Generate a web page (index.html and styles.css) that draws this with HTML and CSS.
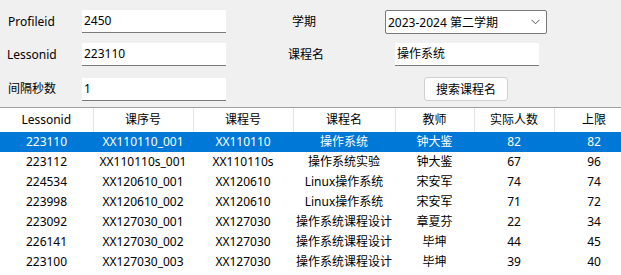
FILE: index.html
```html
<!DOCTYPE html>
<html lang="zh">
<head>
<meta charset="utf-8">
<link rel="stylesheet" href="styles.css">
</head>
<body>
<div class="form">
  <div class="row r1">
    <span class="lbl l1">Profileid</span>
    <div class="tb">2450</div>
    <span class="lbl rl1">学期</span>
    <div class="combo"><span>2023-2024 第二学期</span>
      <svg class="chev" width="9" height="6" viewBox="0 0 9 6"><polyline points="0.5,0.8 4.5,4.8 8.5,0.8" fill="none" stroke="#555" stroke-width="1"/></svg>
    </div>
  </div>
  <div class="row r2">
    <span class="lbl l2">Lessonid</span>
    <div class="tb">223110</div>
    <span class="lbl rl2">课程名</span>
    <div class="tb">操作系统</div>
  </div>
  <div class="row r3">
    <span class="lbl l1">间隔秒数</span>
    <div class="tb">1</div>
    <button class="btn">搜索课程名</button>
  </div>
</div>
<div class="grid-wrap">
  <table class="grid">
    <colgroup>
      <col class="c1"><col class="c2"><col class="c3"><col class="c4"><col class="c5"><col class="c6"><col class="c7">
    </colgroup>
    <thead>
      <tr><th>Lessonid</th><th>课序号</th><th>课程号</th><th>课程名</th><th>教师</th><th>实际人数</th><th>上限</th></tr>
    </thead>
    <tbody>
      <tr class="sel"><td>223110</td><td>XX110110_001</td><td>XX110110</td><td>操作系统</td><td>钟大鉴</td><td>82</td><td>82</td></tr>
      <tr><td>223112</td><td>XX110110s_001</td><td>XX110110s</td><td>操作系统实验</td><td>钟大鉴</td><td>67</td><td>96</td></tr>
      <tr><td>224534</td><td>XX120610_001</td><td>XX120610</td><td>Linux操作系统</td><td>宋安军</td><td>74</td><td>74</td></tr>
      <tr><td>223998</td><td>XX120610_002</td><td>XX120610</td><td>Linux操作系统</td><td>宋安军</td><td>71</td><td>72</td></tr>
      <tr><td>223092</td><td>XX127030_001</td><td>XX127030</td><td>操作系统课程设计</td><td>章夏芬</td><td>22</td><td>34</td></tr>
      <tr><td>226141</td><td>XX127030_002</td><td>XX127030</td><td>操作系统课程设计</td><td>毕坤</td><td>44</td><td>45</td></tr>
      <tr><td>223100</td><td>XX127030_003</td><td>XX127030</td><td>操作系统课程设计</td><td>毕坤</td><td>39</td><td>40</td></tr>
    </tbody>
  </table>
</div>
</body>
</html>
```

FILE: styles.css
```css
html, body {
  margin: 0;
  padding: 0;
  background: #f0f0f0;
  font-family: "Noto Sans", "Noto Sans CJK SC", sans-serif;
  font-size: 12px;
  color: #000;
  overflow: hidden;
}
.form {
  padding-top: 10px;
  height: 107px;
  box-sizing: border-box;
}
.row {
  display: flex;
  align-items: center;
  height: 23px;
}
.r2 { margin-top: 10px; }
.r3 { margin-top: 11px; height: 24px; }
.lbl {
  display: block;
  white-space: nowrap;
  line-height: 16px;
}
.l1 { margin-left: 8px; width: 74px; }
.l2 { margin-left: 7px; width: 75px; }
.rl1 { margin-left: 66px; width: 93px; }
.rl2 { margin-left: 62px; width: 107px; }
.tb {
  width: 144px;
  height: 23px;
  box-sizing: border-box;
  background: #fff;
  border-bottom: 1px solid #7a7a7a;
  padding-left: 2px;
  line-height: 22px;
  white-space: nowrap;
}
.combo {
  width: 162px;
  height: 24px;
  box-sizing: border-box;
  background: #fff;
  border: 1px solid #7a7a7a;
  border-radius: 2px;
  display: flex;
  align-items: center;
  justify-content: space-between;
  padding: 0 6px 0 2px;
  white-space: nowrap;
  margin-top: 1px;
}
.chev { display: block; }
.btn {
  margin-left: 198px;
  width: 84px;
  height: 24px;
  background: #fdfdfd;
  border: 1px solid #d0d0d0;
  border-radius: 3px;
  font: inherit;
  color: #000;
  padding: 0;
}
.grid-wrap {
  border-top: 1px solid #a0a0a0;
  background: #fff;
  height: 168px;
  box-sizing: border-box;
  overflow: hidden;
}
.grid {
  table-layout: fixed;
  width: 634px;
  border-collapse: collapse;
}
.c1 { width: 93px; }
.c2 { width: 100px; }
.c3 { width: 100px; }
.c4 { width: 102px; }
.c5 { width: 79px; }
.c6 { width: 80px; }
.c7 { width: 80px; }
.grid th {
  height: 24px;
  padding: 0;
  font-weight: normal;
  text-align: center;
  border-right: 1px solid #e5e5e5;
  white-space: nowrap;
  line-height: 16px;
}
.grid td {
  height: 20px;
  padding: 0;
  text-align: center;
  white-space: nowrap;
  line-height: 16px;
  overflow: hidden;
}
.grid tr.sel td {
  background: #0078d7;
  color: #fff;
}
```
